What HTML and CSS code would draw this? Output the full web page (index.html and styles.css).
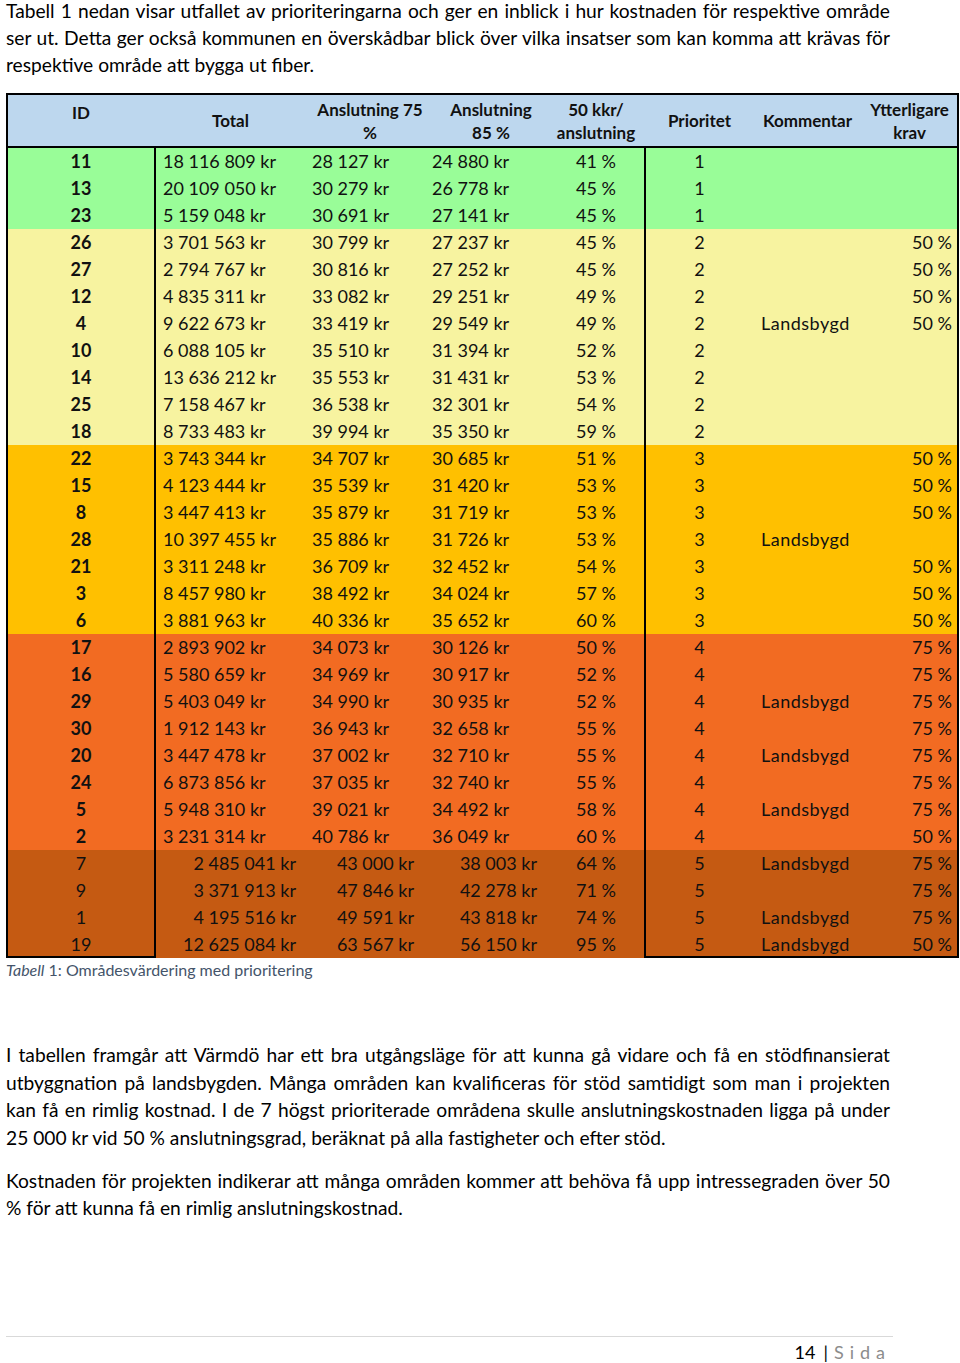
FILE: index.html
```html
<!DOCTYPE html>
<html lang="sv">
<head>
<meta charset="utf-8">
<title>Tabell 1</title>
<link rel="stylesheet" href="styles.css">
</head>
<body>
<div class="page">
  <p class="intro"><span class="ln">Tabell 1 nedan visar utfallet av prioriteringarna och ger en inblick i hur kostnaden för respektive område</span><span class="ln">ser ut. Detta ger också kommunen en överskådbar blick över vilka insatser som kan komma att krävas för</span><span class="ln end">respektive område att bygga ut fiber.</span></p>

  <table class="data">
    <colgroup>
      <col class="w-id"><col class="w-tot"><col class="w-a75"><col class="w-a85"><col class="w-pct"><col class="w-pr"><col class="w-k"><col class="w-y">
    </colgroup>
    <thead>
      <tr>
        <th class="h-id">ID</th>
        <th>Total</th>
        <th class="h-a75">Anslutning 75<br>%</th>
        <th class="h-a85">Anslutning<br>85 %</th>
        <th>50 kkr/<br>anslutning</th>
        <th>Prioritet</th>
        <th>Kommentar</th>
        <th class="h-y">Ytterligare<br>krav</th>
      </tr>
    </thead>
    <tbody>
      <tr class="g"><td class="id">11</td><td class="n t">18 116 809 kr</td><td class="n a">28 127 kr</td><td class="n b">24 880 kr</td><td class="p">41 %</td><td class="pr">1</td><td class="k"></td><td class="y"></td></tr>
      <tr class="g"><td class="id">13</td><td class="n t">20 109 050 kr</td><td class="n a">30 279 kr</td><td class="n b">26 778 kr</td><td class="p">45 %</td><td class="pr">1</td><td class="k"></td><td class="y"></td></tr>
      <tr class="g"><td class="id">23</td><td class="n t">5 159 048 kr</td><td class="n a">30 691 kr</td><td class="n b">27 141 kr</td><td class="p">45 %</td><td class="pr">1</td><td class="k"></td><td class="y"></td></tr>
      <tr class="yl"><td class="id">26</td><td class="n t">3 701 563 kr</td><td class="n a">30 799 kr</td><td class="n b">27 237 kr</td><td class="p">45 %</td><td class="pr">2</td><td class="k"></td><td class="y">50 %</td></tr>
      <tr class="yl"><td class="id">27</td><td class="n t">2 794 767 kr</td><td class="n a">30 816 kr</td><td class="n b">27 252 kr</td><td class="p">45 %</td><td class="pr">2</td><td class="k"></td><td class="y">50 %</td></tr>
      <tr class="yl"><td class="id">12</td><td class="n t">4 835 311 kr</td><td class="n a">33 082 kr</td><td class="n b">29 251 kr</td><td class="p">49 %</td><td class="pr">2</td><td class="k"></td><td class="y">50 %</td></tr>
      <tr class="yl"><td class="id">4</td><td class="n t">9 622 673 kr</td><td class="n a">33 419 kr</td><td class="n b">29 549 kr</td><td class="p">49 %</td><td class="pr">2</td><td class="k">Landsbygd</td><td class="y">50 %</td></tr>
      <tr class="yl"><td class="id">10</td><td class="n t">6 088 105 kr</td><td class="n a">35 510 kr</td><td class="n b">31 394 kr</td><td class="p">52 %</td><td class="pr">2</td><td class="k"></td><td class="y"></td></tr>
      <tr class="yl"><td class="id">14</td><td class="n t">13 636 212 kr</td><td class="n a">35 553 kr</td><td class="n b">31 431 kr</td><td class="p">53 %</td><td class="pr">2</td><td class="k"></td><td class="y"></td></tr>
      <tr class="yl"><td class="id">25</td><td class="n t">7 158 467 kr</td><td class="n a">36 538 kr</td><td class="n b">32 301 kr</td><td class="p">54 %</td><td class="pr">2</td><td class="k"></td><td class="y"></td></tr>
      <tr class="yl"><td class="id">18</td><td class="n t">8 733 483 kr</td><td class="n a">39 994 kr</td><td class="n b">35 350 kr</td><td class="p">59 %</td><td class="pr">2</td><td class="k"></td><td class="y"></td></tr>
      <tr class="go"><td class="id">22</td><td class="n t">3 743 344 kr</td><td class="n a">34 707 kr</td><td class="n b">30 685 kr</td><td class="p">51 %</td><td class="pr">3</td><td class="k"></td><td class="y">50 %</td></tr>
      <tr class="go"><td class="id">15</td><td class="n t">4 123 444 kr</td><td class="n a">35 539 kr</td><td class="n b">31 420 kr</td><td class="p">53 %</td><td class="pr">3</td><td class="k"></td><td class="y">50 %</td></tr>
      <tr class="go"><td class="id">8</td><td class="n t">3 447 413 kr</td><td class="n a">35 879 kr</td><td class="n b">31 719 kr</td><td class="p">53 %</td><td class="pr">3</td><td class="k"></td><td class="y">50 %</td></tr>
      <tr class="go"><td class="id">28</td><td class="n t">10 397 455 kr</td><td class="n a">35 886 kr</td><td class="n b">31 726 kr</td><td class="p">53 %</td><td class="pr">3</td><td class="k">Landsbygd</td><td class="y"></td></tr>
      <tr class="go"><td class="id">21</td><td class="n t">3 311 248 kr</td><td class="n a">36 709 kr</td><td class="n b">32 452 kr</td><td class="p">54 %</td><td class="pr">3</td><td class="k"></td><td class="y">50 %</td></tr>
      <tr class="go"><td class="id">3</td><td class="n t">8 457 980 kr</td><td class="n a">38 492 kr</td><td class="n b">34 024 kr</td><td class="p">57 %</td><td class="pr">3</td><td class="k"></td><td class="y">50 %</td></tr>
      <tr class="go"><td class="id">6</td><td class="n t">3 881 963 kr</td><td class="n a">40 336 kr</td><td class="n b">35 652 kr</td><td class="p">60 %</td><td class="pr">3</td><td class="k"></td><td class="y">50 %</td></tr>
      <tr class="or"><td class="id">17</td><td class="n t">2 893 902 kr</td><td class="n a">34 073 kr</td><td class="n b">30 126 kr</td><td class="p">50 %</td><td class="pr">4</td><td class="k"></td><td class="y">75 %</td></tr>
      <tr class="or"><td class="id">16</td><td class="n t">5 580 659 kr</td><td class="n a">34 969 kr</td><td class="n b">30 917 kr</td><td class="p">52 %</td><td class="pr">4</td><td class="k"></td><td class="y">75 %</td></tr>
      <tr class="or"><td class="id">29</td><td class="n t">5 403 049 kr</td><td class="n a">34 990 kr</td><td class="n b">30 935 kr</td><td class="p">52 %</td><td class="pr">4</td><td class="k">Landsbygd</td><td class="y">75 %</td></tr>
      <tr class="or"><td class="id">30</td><td class="n t">1 912 143 kr</td><td class="n a">36 943 kr</td><td class="n b">32 658 kr</td><td class="p">55 %</td><td class="pr">4</td><td class="k"></td><td class="y">75 %</td></tr>
      <tr class="or"><td class="id">20</td><td class="n t">3 447 478 kr</td><td class="n a">37 002 kr</td><td class="n b">32 710 kr</td><td class="p">55 %</td><td class="pr">4</td><td class="k">Landsbygd</td><td class="y">75 %</td></tr>
      <tr class="or"><td class="id">24</td><td class="n t">6 873 856 kr</td><td class="n a">37 035 kr</td><td class="n b">32 740 kr</td><td class="p">55 %</td><td class="pr">4</td><td class="k"></td><td class="y">75 %</td></tr>
      <tr class="or"><td class="id">5</td><td class="n t">5 948 310 kr</td><td class="n a">39 021 kr</td><td class="n b">34 492 kr</td><td class="p">58 %</td><td class="pr">4</td><td class="k">Landsbygd</td><td class="y">75 %</td></tr>
      <tr class="or"><td class="id">2</td><td class="n t">3 231 314 kr</td><td class="n a">40 786 kr</td><td class="n b">36 049 kr</td><td class="p">60 %</td><td class="pr">4</td><td class="k"></td><td class="y">50 %</td></tr>
      <tr class="dk"><td class="id">7</td><td class="n t">2 485 041 kr</td><td class="n a">43 000 kr</td><td class="n b">38 003 kr</td><td class="p">64 %</td><td class="pr">5</td><td class="k">Landsbygd</td><td class="y">75 %</td></tr>
      <tr class="dk"><td class="id">9</td><td class="n t">3 371 913 kr</td><td class="n a">47 846 kr</td><td class="n b">42 278 kr</td><td class="p">71 %</td><td class="pr">5</td><td class="k"></td><td class="y">75 %</td></tr>
      <tr class="dk"><td class="id">1</td><td class="n t">4 195 516 kr</td><td class="n a">49 591 kr</td><td class="n b">43 818 kr</td><td class="p">74 %</td><td class="pr">5</td><td class="k">Landsbygd</td><td class="y">75 %</td></tr>
      <tr class="dk last"><td class="id">19</td><td class="n t">12 625 084 kr</td><td class="n a">63 567 kr</td><td class="n b">56 150 kr</td><td class="p">95 %</td><td class="pr">5</td><td class="k">Landsbygd</td><td class="y">50 %</td></tr>
    </tbody>
  </table>

  <p class="caption"><em>Tabell</em> 1: Områdesvärdering med prioritering</p>

  <p class="body first"><span class="ln">I tabellen framgår att Värmdö har ett bra utgångsläge för att kunna gå vidare och få en stödfinansierat</span><span class="ln">utbyggnation på landsbygden. Många områden kan kvalificeras för stöd samtidigt som man i projekten</span><span class="ln">kan få en rimlig kostnad. I de 7 högst prioriterade områdena skulle anslutningskostnaden ligga på under</span><span class="ln end">25 000 kr vid 50 % anslutningsgrad, beräknat på alla fastigheter och efter stöd.</span></p>
  <p class="body second"><span class="ln">Kostnaden för projekten indikerar att många områden kommer att behöva få upp intressegraden över 50</span><span class="ln end">% för att kunna få en rimlig anslutningskostnad.</span></p>

  <footer class="foot">
    <span class="num">14</span><span class="bar">|</span><span class="sida">Sida</span>
  </footer>
</div>
</body>
</html>
```

FILE: styles.css
```css
* { box-sizing: border-box; }

body {
  margin: 0;
  background: #fff;
  color: #000;
  font-family: Lato, "Open Sans", "Liberation Sans", sans-serif;
}

.page {
  width: 960px;
  height: 1363px;
  padding: 0 0 0 6px;
  overflow: hidden;
}

/* justified document lines */
.ln {
  display: block;
  width: 884px;
  white-space: nowrap;
  text-align: justify;
  text-align-last: justify;
}

.ln.end { text-align-last: left; }

.intro {
  margin: -2px 0 0;
  font-size: 19.2px;
  line-height: 26.8px;
}

/* ---------- table ---------- */
.data {
  margin-top: 15px;
  width: 953px;
  table-layout: fixed;
  border-collapse: separate;
  border-spacing: 0;
  font-size: 18px;
  color: #111;
}

.w-id { width: 150px; }
.w-tot { width: 149px; }
.w-a75 { width: 122px; }
.w-a85 { width: 121px; }
.w-pct { width: 96px; }
.w-pr { width: 111px; }
.w-k { width: 105px; }
.w-y { width: 99px; }

.data th {
  height: 55px;
  padding: 0;
  background: #bdd7ee;
  font-size: 17px;
  font-weight: 700;
  line-height: 23px;
  text-align: center;
  vertical-align: middle;
  white-space: nowrap;
  box-shadow: inset 0 2px 0 #000, inset 0 -2px 0 #000;
}

.data th.h-id {
  vertical-align: top;
  padding-top: 8px;
  box-shadow: inset 0 2px 0 #000, inset 0 -2px 0 #000, inset 2px 0 0 #000;
}

.data th.h-y {
  box-shadow: inset 0 2px 0 #000, inset 0 -2px 0 #000, inset -2px 0 0 #000;
}

.data th.h-a75 { padding-left: 8px; }
.data th.h-a85 { padding-left: 7px; }

.data td {
  height: 27px;
  padding: 0;
  line-height: 27px;
  white-space: nowrap;
}

.data td.id {
  text-align: center;
  font-weight: 700;
  box-shadow: inset 2px 0 0 #000, inset -2px 0 0 #000;
}

.data td.t { padding-left: 7px; }
.data td.a { padding-left: 7px; }
.data td.b { padding-left: 5px; }

.data td.p { text-align: center; }

.data td.pr {
  text-align: center;
  box-shadow: inset 2px 0 0 #000;
}

.data td.k { padding-left: 6px; letter-spacing: 0.5px; }

.data td.y {
  text-align: right;
  padding-right: 7px;
  box-shadow: inset -2px 0 0 #000;
}

/* row colours */
.g td { background: #99fd98; }
.yl td { background: #f7f3a0; }
.go td { background: #ffc000; }
.or td { background: #f26b22; }
.dk td { background: #c55a12; }

.dk td.id { font-weight: 400; }
.dk td.n { text-align: right; padding-left: 0; }
.dk td.t { padding-right: 9px; }
.dk td.a { padding-right: 13px; }
.dk td.b { padding-right: 11px; }

.last td.id { box-shadow: inset 2px 0 0 #000, inset -2px 0 0 #000, inset 0 -2px 0 #000; }
.last td.pr { box-shadow: inset 2px 0 0 #000, inset 0 -2px 0 #000; }
.last td.k { box-shadow: inset 0 -2px 0 #000; }
.last td.y { box-shadow: inset -2px 0 0 #000, inset 0 -2px 0 #000; }

/* ---------- text below ---------- */
.caption {
  margin: 3px 0 0;
  font-size: 16px;
  line-height: 18px;
  color: #44546a;
}

.body {
  margin: 0;
  font-size: 19.2px;
  line-height: 27.4px;
}

.body.first { margin-top: 62px; }
.body.second { margin-top: 15.6px; }

.foot {
  margin-top: 115px;
  width: 887px;
  border-top: 1px solid #d9d9d9;
  padding-top: 4px;
  display: flex;
  justify-content: flex-end;
  align-items: center;
  font-size: 18px;
  line-height: 22px;
  padding-right: 8px;
}

.foot .num { color: #000; margin-right: 3px; }
.foot .bar { color: #000; margin: 0 6px 0 5px; }
.foot .sida { color: #8c8c8c; letter-spacing: 6px; margin-right: -6px; }
```
